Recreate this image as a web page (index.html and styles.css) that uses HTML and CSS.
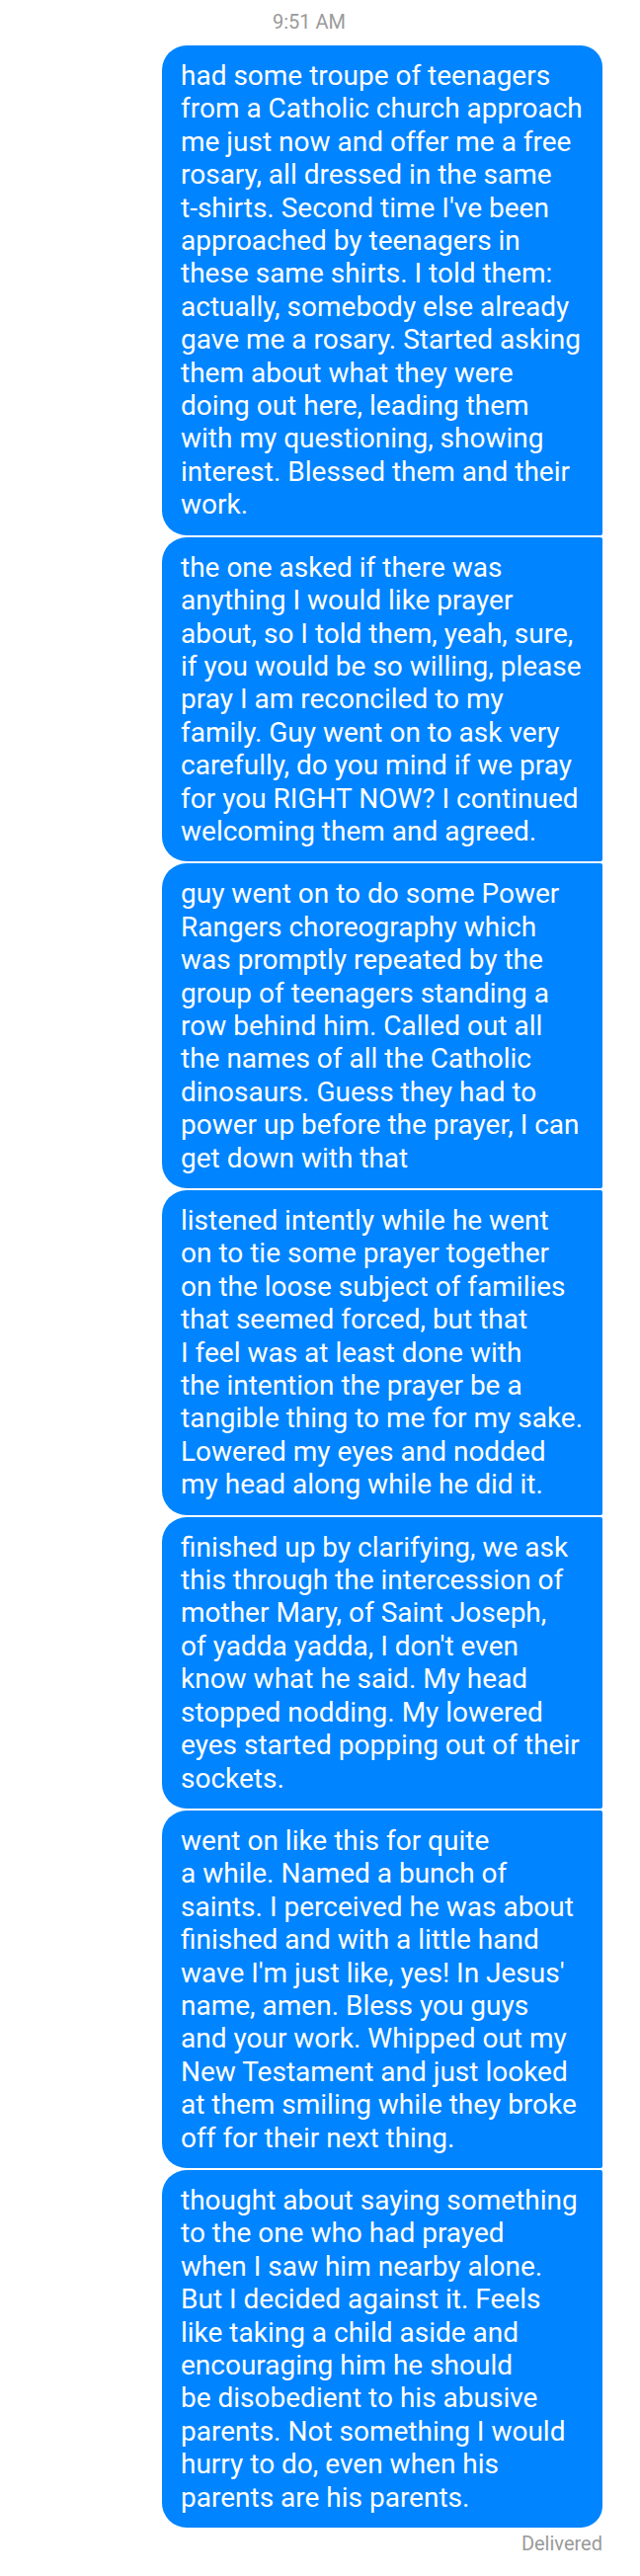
FILE: index.html
```html
<!DOCTYPE html>
<html lang="en">
<head>
<meta charset="utf-8">
<title>Messages</title>
<link rel="stylesheet" href="styles.css">
</head>
<body>
<div class="thread">
  <div class="timestamp">9:51 AM</div>
  <div class="group">
    <div class="bubble first">had some troupe of teenagers<br>from a Catholic church approach<br>me just now and offer me a free<br>rosary, all dressed in the same<br>t-shirts. Second time I've been<br>approached by teenagers in<br>these same shirts. I told them:<br>actually, somebody else already<br>gave me a rosary. Started asking<br>them about what they were<br>doing out here, leading them<br>with my questioning, showing<br>interest. Blessed them and their<br>work.</div>
    <div class="bubble">the one asked if there was<br>anything I would like prayer<br>about, so I told them, yeah, sure,<br>if you would be so willing, please<br>pray I am reconciled to my<br>family. Guy went on to ask very<br>carefully, do you mind if we pray<br>for you RIGHT NOW? I continued<br>welcoming them and agreed.</div>
    <div class="bubble">guy went on to do some Power<br>Rangers choreography which<br>was promptly repeated by the<br>group of teenagers standing a<br>row behind him. Called out all<br>the names of all the Catholic<br>dinosaurs. Guess they had to<br>power up before the prayer, I can<br>get down with that</div>
    <div class="bubble">listened intently while he went<br>on to tie some prayer together<br>on the loose subject of families<br>that seemed forced, but that<br>I feel was at least done with<br>the intention the prayer be a<br>tangible thing to me for my sake.<br>Lowered my eyes and nodded<br>my head along while he did it.</div>
    <div class="bubble">finished up by clarifying, we ask<br>this through the intercession of<br>mother Mary, of Saint Joseph,<br>of yadda yadda, I don't even<br>know what he said. My head<br>stopped nodding. My lowered<br>eyes started popping out of their<br>sockets.</div>
    <div class="bubble">went on like this for quite<br>a while. Named a bunch of<br>saints. I perceived he was about<br>finished and with a little hand<br>wave I'm just like, yes! In Jesus'<br>name, amen. Bless you guys<br>and your work. Whipped out my<br>New Testament and just looked<br>at them smiling while they broke<br>off for their next thing.</div>
    <div class="bubble last">thought about saying something<br>to the one who had prayed<br>when I saw him nearby alone.<br>But I decided against it. Feels<br>like taking a child aside and<br>encouraging him he should<br>be disobedient to his abusive<br>parents. Not something I would<br>hurry to do, even when his<br>parents are his parents.</div>
  </div>
  <div class="status">Delivered</div>
</div>
</body>
</html>
```

FILE: styles.css
```css
html, body {
  margin: 0;
  padding: 0;
  background: #ffffff;
}

body {
  font-family: Roboto, "Noto Sans", Arial, sans-serif;
  width: 648px;
  height: 2608px;
  overflow: hidden;
}

.thread {
  display: flex;
  flex-direction: column;
  padding: 10px 38px 0 0;
}

.timestamp {
  text-align: center;
  font-size: 20px;
  line-height: 24px;
  color: #9a9a9a;
  padding-left: 38px;
  padding-right: 22px;
  margin-bottom: 12px;
}

.group {
  display: flex;
  flex-direction: column;
  align-items: flex-end;
  gap: 2px;
}

.bubble {
  box-sizing: border-box;
  width: 446px;
  background: #0084ff;
  color: #ffffff;
  font-size: 28px;
  line-height: 33.4px;
  white-space: nowrap;
  padding: 14px 14px 14px 19px;
  border-radius: 25px 2px 2px 25px;
}

.bubble.first {
  border-top-right-radius: 22px;
}

.bubble.last {
  border-bottom-right-radius: 22px;
}

.status {
  align-self: flex-end;
  margin-top: 5px;
  font-size: 20px;
  line-height: 23px;
  color: #9a9a9a;
}
```
